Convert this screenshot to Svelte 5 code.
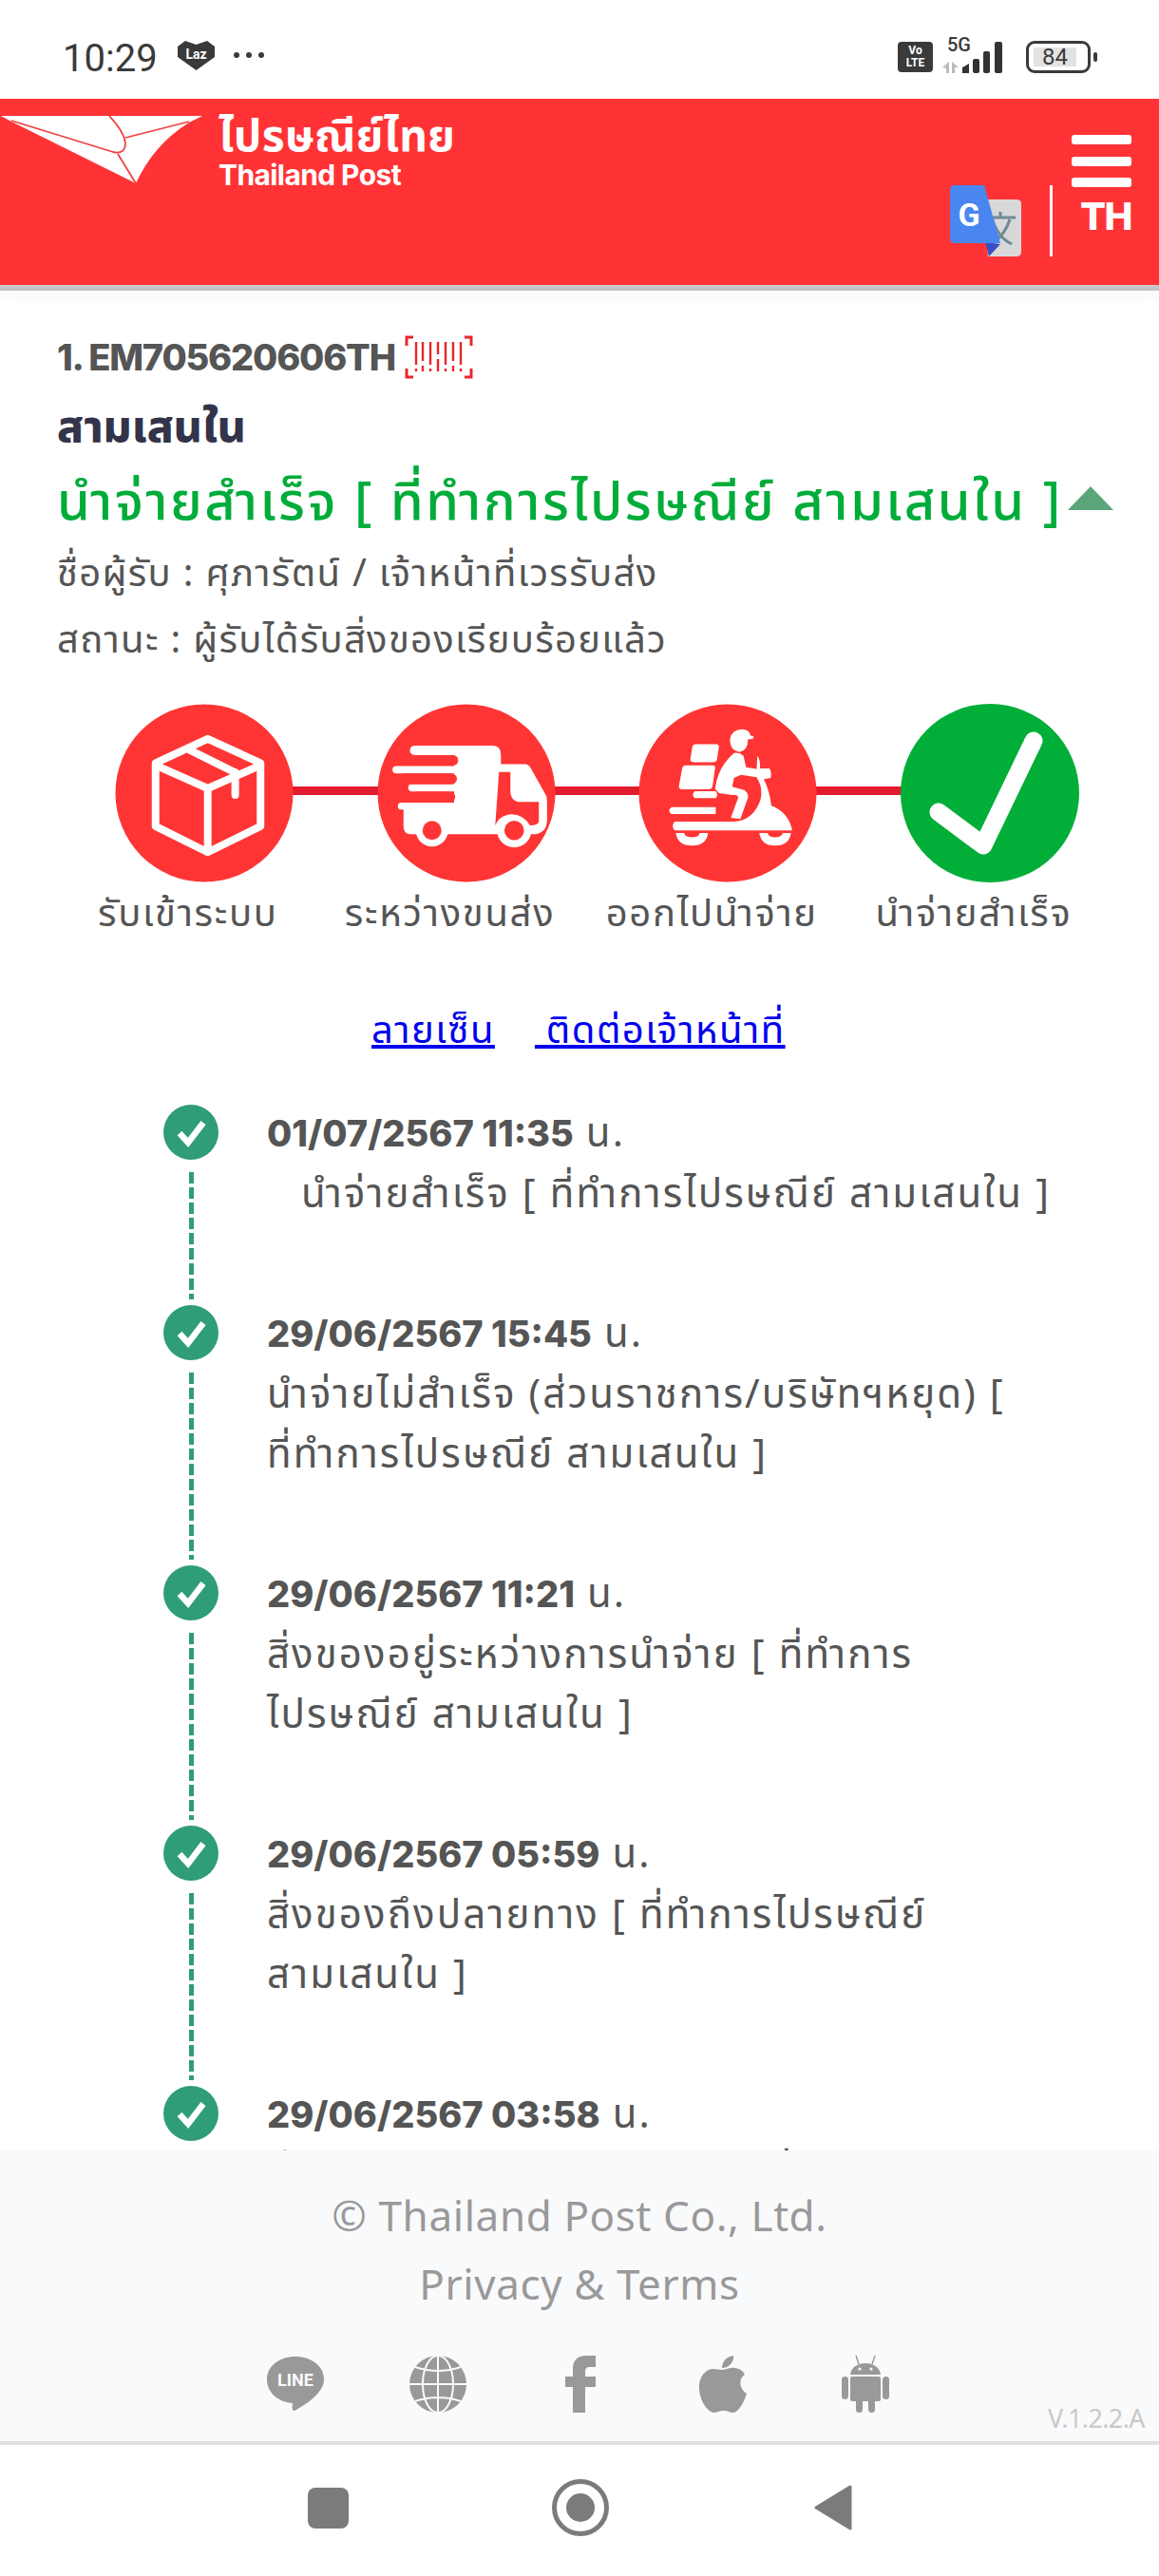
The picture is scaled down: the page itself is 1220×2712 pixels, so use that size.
<script>
  const steps = [
    { label: 'รับเข้าระบบ', kind: 'box' },
    { label: 'ระหว่างขนส่ง', kind: 'truck' },
    { label: 'ออกไปนำจ่าย', kind: 'scooter' },
    { label: 'นำจ่ายสำเร็จ', kind: 'done' }
  ];

  const events = [
    { date: '01/07/2567 11:35', lines: ['นำจ่ายสำเร็จ [ ที่ทำการไปรษณีย์ สามเสนใน ]'], indent: true },
    { date: '29/06/2567 15:45', lines: ['นำจ่ายไม่สำเร็จ (ส่วนราชการ/บริษัทฯหยุด) [', 'ที่ทำการไปรษณีย์ สามเสนใน ]'] },
    { date: '29/06/2567 11:21', lines: ['สิ่งของอยู่ระหว่างการนำจ่าย [ ที่ทำการ', 'ไปรษณีย์ สามเสนใน ]'] },
    { date: '29/06/2567 05:59', lines: ['สิ่งของถึงปลายทาง [ ที่ทำการไปรษณีย์', 'สามเสนใน ]'] },
    { date: '29/06/2567 03:58', lines: ['สิ่งของอยู่ระหว่างการขนส่ง [ ที่ทำการ', 'ไปรษณีย์ สามเสนใน ]'] }
  ];
</script>

<div class="page">
  <div class="status">
    <div class="status-left">
      <span class="clock">10:29</span>
      <svg class="laz" viewBox="0 0 39 31"><path d="M8 0 L19.5 4 L31 0 L39 6 V17 L19.5 31 L0 17 V6 Z" fill="#3a3a3a"/><text x="19.5" y="19" text-anchor="middle" class="laz-text">Laz</text></svg>
      <span class="dots"><i></i><i></i><i></i></span>
    </div>
    <div class="status-right">
      <div class="volte"><span>Vo</span><span>LTE</span></div>
      <div class="signal">
        <span class="five">5G</span>
        <svg viewBox="0 0 72 36" width="72" height="36">
          <path d="M0 30 L7 24 V36 H4 V31 Z M10 36 V24 L17 30 H13 V36 Z" fill="#bbb"/>
          <path d="M21 30 L28 26 V36 H21 Z" fill="#333"/>
          <rect x="32" y="21" width="7" height="15" rx="2" fill="#333"/>
          <rect x="43" y="13" width="7" height="23" rx="2" fill="#333"/>
          <rect x="55" y="3" width="8" height="33" rx="2" fill="#333"/>
        </svg>
      </div>
      <div class="battery"><div class="battery-body"><span>84</span></div><i></i></div>
    </div>
  </div>

  <header class="top">
    <div class="brand">
      <svg class="logo" viewBox="0 0 214 72">
        <path d="M1 0 H213 L199 7 Q162 30 143 71 L12 6 Z" fill="#fff"/>
        <path d="M12 5 L119 38 Q132 41 132 28 Q130 16 115 0 M132 23 L199 6 M124 40 L143 71" fill="none" stroke="#f04040" stroke-width="1.8"/>
      </svg>
      <div class="brand-text">
        <div class="brand-th">ไปรษณีย์ไทย</div>
        <div class="brand-en">Thailand Post</div>
      </div>
    </div>
    <div class="top-right">
      <svg class="translate" viewBox="0 0 75 75">
        <path d="M35 15 H70 Q75 15 75 20 V70 Q75 75 70 75 H40 Z" fill="#d8d8d8"/>
        <path d="M38 34 H69 M53 28 V34 M44 34 Q50 55 65 62 M63 36 Q58 52 44 62" fill="none" stroke="#6e8a96" stroke-width="3"/>
        <path d="M37 60 L53 62 L41 75 Z" fill="#3b4fc0"/>
        <path d="M5 0 H36 L53 61 H5 Q0 61 0 56 V5 Q0 0 5 0 Z" fill="#4a86f0"/>
        <text x="20" y="43" text-anchor="middle" class="g">G</text>
      </svg>
      <div class="divider"></div>
      <div class="menu-col">
        <div class="burger"><i></i><i></i><i></i></div>
        <span class="lang">TH</span>
      </div>
    </div>
  </header>
  <div class="top-shadow"></div>

  <main class="content">
    <div class="summary">
      <div class="track-no">
        <span>1. EM705620606TH</span>
        <svg viewBox="0 0 72 46" width="72" height="46">
          <path d="M9 2 H2 V11 M63 2 H70 V11 M2 35 V44 H9 M70 35 V44 H63" fill="none" stroke="#e8262c" stroke-width="3"/>
          <path d="M12 7 V31 M12 35 V38 M19 7 V27 M19 32 V38 M27 7 V31 M27 35 V38 M35 7 V20 M35 25 V38 M43 7 V31 M43 35 V38 M51 7 V27 M51 32 V38 M59 7 V31 M59 35 V38" fill="none" stroke="#e8262c" stroke-width="2.4"/>
        </svg>
      </div>
      <div class="office">สามเสนใน</div>
      <div class="result">
        <span>นำจ่ายสำเร็จ [ ที่ทำการไปรษณีย์ สามเสนใน ]</span>
        <i class="caret"></i>
      </div>
      <div class="info first">ชื่อผู้รับ : ศุภารัตน์ / เจ้าหน้าที่เวรรับส่ง</div>
      <div class="info">สถานะ : ผู้รับได้รับสิ่งของเรียบร้อยแล้ว</div>
    </div>

    <div class="steps">
      {#each steps as step, i}
        <div class="step">
          <div class="badge">
            {#if i < steps.length - 1}<span class="connector"></span>{/if}
            {#if step.kind === 'box'}
              <svg viewBox="-1.5 -5.5 631 631">
                <circle cx="314" cy="310" r="281" fill="#ff3535"/>
                <g fill="none" stroke="#fff" stroke-width="24" stroke-linejoin="round">
                  <path d="M325 138 L492 215 V415 L325 497 L160 415 V215 Z"/>
                  <path d="M160 222 L325 295 L492 222 M325 295 V497"/>
                  <path d="M265 172 L412 245"/>
                </g>
                <path d="M412 245 V316" stroke="#fff" stroke-width="24" stroke-linecap="round"/>
              </svg>
            {:else if step.kind === 'truck'}
              <svg viewBox="13.5 -5.5 631 631">
                <circle cx="329" cy="310" r="281" fill="#ff3535"/>
                <g fill="#fff">
                  <path d="M290 160 H410 Q438 160 438 188 V218 H515 Q525 218 532 230 L578 312 Q584 320 584 335 V395 Q584 435 545 440 H150 Q130 438 130 415 V351 H290 Z"/>
                  <circle cx="220" cy="428" r="51"/>
                  <circle cx="480" cy="428" r="54"/>
                </g>
                <g fill="none" stroke="#fff" stroke-linecap="round">
                  <path d="M165 175 H320" stroke-width="30"/>
                  <path d="M107 236 H320" stroke-width="24"/>
                  <path d="M157 293 H320" stroke-width="24"/>
                  <path d="M123 351 H320" stroke-width="22"/>
                </g>
                <g fill="none" stroke="#ff3535" stroke-linecap="round">
                  <path d="M170 206 H287" stroke-width="32"/>
                  <path d="M130 265 H282" stroke-width="34"/>
                  <path d="M170 322 H277" stroke-width="33"/>
                </g>
                <path d="M432 243 H468 V300 Q468 338 500 338 H558 V400 Q555 412 530 412 Q505 372 460 378 Q430 385 420 412 Z" fill="#ff3535"/>
                <circle cx="220" cy="428" r="30" fill="#ff3535"/>
                <circle cx="480" cy="428" r="31" fill="#ff3535"/>
              </svg>
            {:else if step.kind === 'scooter'}
              <svg viewBox="842.5 -5.5 631 631">
                <circle cx="1158" cy="310" r="281" fill="#ff3535"/>
                <g fill="#fff">
                  <path d="M1165 140 Q1170 108 1205 108 Q1228 110 1230 128 L1240 130 L1238 138 L1222 140 Q1222 175 1195 180 Q1165 175 1165 140 Z"/>
                  <path d="M1056 155 H1122 Q1132 155 1130 166 L1124 204 Q1122 212 1112 212 H1050 Q1038 212 1040 202 L1046 164 Q1048 155 1056 155 Z"/>
                  <path d="M1026 222 H1110 Q1120 222 1118 232 L1110 288 Q1108 298 1096 298 H1014 Q1002 298 1004 286 L1014 232 Q1016 222 1026 222 Z"/>
                  <path d="M1178 183 Q1195 180 1208 192 L1216 228 L1262 236 L1265 262 L1200 252 L1178 262 L1172 290 L1210 300 Q1225 310 1222 325 L1198 392 L1168 388 L1192 322 Q1186 314 1172 316 L1130 310 L1118 296 Q1128 225 1178 183 Z"/>
                  <path d="M1252 192 Q1262 205 1260 232 L1290 232 Q1298 240 1294 262 L1272 266 Q1290 300 1296 350 Q1350 370 1362 428 H990 Q978 414 990 400 H1180 Q1240 395 1262 330 Q1270 290 1250 262 L1250 222 Z"/>
                  <path d="M1054 304 H1120 Q1130 315 1120 326 H1054 Q1042 315 1054 304 Z"/>
                  <path d="M980 354 H1120 L1120 376 H980 Q966 365 980 354 Z"/>
                  <path d="M1000 376 H1090 Q1104 388 1090 400 H1000 Z" fill="#ff3535"/>
                  <path d="M994 436 H1096 Q1090 476 1045 476 Q1000 476 994 436 Z"/>
                  <path d="M1258 436 H1358 Q1352 476 1308 476 Q1264 476 1258 436 Z"/>
                </g>
                <path d="M1020 436 H1070 Q1066 450 1045 450 Q1024 450 1020 436 Z" fill="#ff3535"/>
                <path d="M1284 436 H1332 Q1328 450 1308 450 Q1288 450 1284 436 Z" fill="#ff3535"/>
              </svg>
            {:else}
              <svg viewBox="0 0 210 210">
                <circle cx="105" cy="105" r="94" fill="#00ae38"/>
                <path d="M51 125 L98 160 L151 50" fill="none" stroke="#fff" stroke-width="19" stroke-linecap="round" stroke-linejoin="round"/>
              </svg>
            {/if}
          </div>
          <div class="step-label">{step.label}</div>
        </div>
      {/each}
    </div>

    <div class="links">
      <a href="#sign">ลายเซ็น</a>
      <a href="#contact">&nbsp;ติดต่อเจ้าหน้าที่</a>
    </div>

    <div class="timeline">
      {#each events as ev}
        <div class="event">
          <div class="rail">
            <svg class="tick" viewBox="0 0 58 58">
              <circle cx="29" cy="29" r="29" fill="#2f9c7a"/>
              <path d="M17 30 L26 40 L42 19" fill="none" stroke="#fff" stroke-width="6.5"/>
            </svg>
            <span class="dash"></span>
          </div>
          <div class="event-body">
            <div class="event-date"><b>{ev.date}</b> น.</div>
            {#each ev.lines as line}
              <div class="event-line" class:indent={ev.indent}>{line}</div>
            {/each}
          </div>
        </div>
      {/each}
    </div>
  </main>

  <footer class="foot">
    <div class="foot-line">© Thailand Post Co., Ltd.</div>
    <div class="foot-line">Privacy &amp; Terms</div>
    <div class="socials">
      <svg viewBox="0 0 60 60"><path d="M30 1 C47 1 60 11 60 25 C60 38 44 50 29 58 C27 58 26 56 27 50 C12 49 0 39 0 25 C0 11 13 1 30 1 Z" fill="#999"/><text x="30" y="32" text-anchor="middle" class="line-text">LINE</text></svg>
      <svg viewBox="0 0 60 60"><circle cx="30" cy="30" r="30" fill="#999"/><g fill="none" stroke="#f9fafc" stroke-width="2"><path d="M0 30 H60 M6 12 Q30 20 54 12 M6 48 Q30 40 54 48 M30 0 V60"/><ellipse cx="30" cy="30" rx="16" ry="30"/></g></svg>
      <svg viewBox="0 0 60 60"><path d="M22 60 V33 H14 V22 H22 V14 C22 4 28 0 36 0 H46 V12 H40 C36 12 35 14 35 17 V22 H46 V33 H35 V60 Z" fill="#999"/></svg>
      <svg viewBox="0 0 60 60"><path d="M29 15 C33 15 38 12 43 13 C48 14 51 16 53 20 C47 23 46 34 55 40 C52 49 47 59 41 60 C37 60 35 58 31 58 C26 58 24 60 20 60 C12 58 4 44 5 31 C6 20 13 14 20 14 C23 14 26 15 29 15 Z M29 13 C29 6 34 1 41 0 C42 7 36 13 29 13 Z" fill="#999"/></svg>
      <svg viewBox="0 0 60 60"><g fill="#999"><path d="M14 20 C15 12 22 8 30 8 C38 8 45 12 46 20 Z"/><rect x="14" y="22" width="32" height="26" rx="2"/><rect x="5" y="22" width="7" height="24" rx="3.5"/><rect x="48" y="22" width="7" height="24" rx="3.5"/><rect x="20" y="44" width="7" height="16" rx="3.5"/><rect x="33" y="44" width="7" height="16" rx="3.5"/></g><path d="M20 0 L23 9 M40 0 L37 9" stroke="#999" stroke-width="1.5"/><circle cx="24" cy="14" r="1.6" fill="#f9fafc"/><circle cx="36" cy="14" r="1.6" fill="#f9fafc"/></svg>
    </div>
    <span class="version">V.1.2.2.A</span>
  </footer>

  <nav class="nav">
    <i class="nav-square"></i>
    <svg width="60" height="60" viewBox="0 0 60 60"><circle cx="30" cy="30" r="27.5" fill="none" stroke="#7b7b7b" stroke-width="5"/><circle cx="30" cy="30" r="15" fill="#7b7b7b"/></svg>
    <svg class="nav-back" width="40" height="48" viewBox="0 0 40 48"><path d="M38 2 V46 L2 24 Z" fill="#7b7b7b" stroke="#7b7b7b" stroke-width="3" stroke-linejoin="round"/></svg>
  </nav>
</div>

<style>
  :global(body) {
    margin: 0;
    background: #fff;
  }

  .page {
    width: 1220px;
    height: 2712px;
    display: flex;
    flex-direction: column;
    overflow: hidden;
    font-family: "Noto Sans Thai", "Noto Sans", "Inter", "Liberation Sans", sans-serif;
    color: #555;
  }

  i {
    display: block;
  }

  /* status bar */
  .status {
    height: 104px;
    flex: none;
    display: flex;
    justify-content: space-between;
    align-items: center;
    padding: 24px 65px 8px 66px;
    box-sizing: border-box;
  }

  .status-left,
  .status-right {
    display: flex;
    align-items: center;
  }

  .clock {
    font-family: Roboto, sans-serif;
    font-size: 40px;
    line-height: 48px;
    color: #3a3a3a;
    margin-top: 3px;
  }

  .laz {
    width: 39px;
    height: 31px;
    margin: -3px 0 0 21px;
  }

  .laz-text {
    font: 700 14px Roboto, sans-serif;
    fill: #fff;
  }

  .dots {
    display: flex;
    gap: 7px;
    margin-left: 20px;
    margin-top: -4px;
  }

  .dots i {
    width: 6px;
    height: 6px;
    border-radius: 50%;
    background: #3a3a3a;
  }

  .volte {
    width: 37px;
    height: 32px;
    background: #3a3a3a;
    border-radius: 4px;
    color: #fff;
    font: 700 12px/13px Roboto, sans-serif;
    display: flex;
    flex-direction: column;
    align-items: center;
    justify-content: center;
  }

  .signal {
    position: relative;
    width: 72px;
    height: 36px;
    margin-left: 10px;
    margin-top: -2px;
  }

  .signal svg {
    position: absolute;
    left: 0;
    top: 0;
  }

  .five {
    position: absolute;
    left: 5px;
    top: -5px;
    font: 500 20px/22px Roboto, sans-serif;
    color: #3a3a3a;
  }

  .battery {
    display: flex;
    align-items: center;
    margin-left: 16px;
  }

  .battery-body {
    display: flex;
    padding: 4px 12px 4px 5px;
    box-sizing: content-box;
    width: 45px;
    height: 20px;
    border: 3px solid #3a3a3a;
    border-radius: 9px;
  }

  .battery-body span {
    flex: 1;
    background: #e2e2e2;
    font: 24px/20px Roboto, sans-serif;
    color: #3a3a3a;
    text-align: center;
  }

  .battery i {
    width: 4px;
    height: 10px;
    margin-left: 3px;
    background: #3a3a3a;
    border-radius: 2px;
  }

  /* red header */
  .top {
    height: 196px;
    flex: none;
    background: #ff3336;
    display: flex;
    justify-content: space-between;
    box-sizing: border-box;
    padding: 18px 29px 0 0;
    color: #fff;
  }

  .top-shadow {
    height: 6px;
    flex: none;
    background: linear-gradient(#cfcfcf, #bdbdbd);
    box-shadow: 0 6px 12px rgba(0, 0, 0, 0.06);
  }

  .brand {
    display: flex;
    gap: 16px;
    align-items: flex-start;
  }

  .logo {
    width: 214px;
    height: 72px;
  }

  .brand-th {
    font-size: 46px;
    font-weight: 700;
    line-height: 50px;
    letter-spacing: 0.4px;
    margin-top: -2px;
  }

  .brand-en {
    font-size: 30px;
    font-weight: 700;
    line-height: 30px;
    font-family: Inter, sans-serif;
    letter-spacing: -0.6px;
    margin-top: -1px;
  }

  .top-right {
    display: flex;
    align-items: flex-start;
  }

  .translate {
    width: 75px;
    height: 75px;
    margin-top: 73px;
  }

  .g {
    font: 700 34px Roboto, sans-serif;
    fill: #fff;
  }

  .divider {
    width: 3px;
    height: 75px;
    background: #fff;
    margin: 73px 20px 0 30px;
  }

  .menu-col {
    width: 63px;
    padding-top: 20px;
    display: flex;
    flex-direction: column;
    align-items: flex-end;
  }

  .burger {
    width: 63px;
    display: flex;
    flex-direction: column;
    gap: 12.5px;
  }

  .burger i {
    height: 10px;
    background: #fff;
    border-radius: 3px;
  }

  .lang {
    font: 800 40px/48px Inter, sans-serif;
    margin-top: 7px;
    letter-spacing: -1.5px;
  }

  /* main */
  .content {
    flex: 1;
    min-height: 0;
    overflow: hidden;
    padding: 46px 0 0 60px;
  }

  .track-no {
    display: flex;
    align-items: center;
    gap: 10px;
    height: 48px;
    font: 800 38px/48px Inter, sans-serif;
    letter-spacing: -1.2px;
    color: #555;
  }

  .office {
    margin-top: 21px;
    font-size: 46px;
    font-weight: 800;
    line-height: 60px;
    color: #33334a;
  }

  .result {
    display: flex;
    align-items: center;
    margin-top: 13px;
    height: 72px;
    font-size: 56px;
    font-weight: 500;
    letter-spacing: 2.5px;
    color: #00ac3a;
    white-space: nowrap;
  }

  .caret {
    margin: -12px 0 0 5px;
    width: 0;
    height: 0;
    border-left: 24px solid transparent;
    border-right: 24px solid transparent;
    border-bottom: 25px solid #5aa67a;
  }

  .info {
    font-size: 40px;
    letter-spacing: 1.3px;
    line-height: 70px;
    white-space: nowrap;
  }

  .info.first {
    margin-top: 4px;
  }

  .steps {
    margin-top: 20px;
    display: grid;
    grid-template-columns: repeat(4, 275.7px);
  }

  .step {
    text-align: center;
  }

  .badge {
    position: relative;
    width: 210px;
    height: 210px;
    margin-left: 50px;
  }

  .badge svg {
    position: relative;
    display: block;
    width: 210px;
    height: 210px;
  }

  .connector {
    position: absolute;
    left: 150px;
    top: 98px;
    width: 276px;
    height: 9px;
    background: #e31b2e;
  }

  .step-label {
    font-size: 40px;
    letter-spacing: 1.7px;
    line-height: 50px;
    white-space: nowrap;
    margin-top: -2px;
  }

  .links {
    margin-top: 73px;
    padding-left: 331px;
    display: flex;
    gap: 42px;
    font-size: 40px;
    letter-spacing: 1.5px;
    line-height: 50px;
  }

  .links a {
    color: #0000ee;
  }

  .timeline {
    margin-top: 52px;
    padding-left: 112px;
  }

  .event {
    display: flex;
    min-height: 210px;
  }

  .rail {
    width: 109px;
    flex: none;
    display: flex;
    flex-direction: column;
    position: relative;
  }

  .tick {
    width: 58px;
    height: 58px;
    flex: none;
    display: block;
  }

  .dash {
    position: absolute;
    left: 27px;
    top: 71px;
    bottom: 6px;
    width: 5px;
    background: repeating-linear-gradient(#2f9c7a 0 12px, transparent 12px 16px);
  }

  .event-body {
    padding-bottom: 84px;
  }

  .event-date {
    font-size: 42px;
    letter-spacing: 2.1px;
    line-height: 63px;
    margin-top: -1px;
    margin-bottom: 1px;
  }

  .event-date b {
    font-family: Inter, sans-serif;
    font-weight: 800;
    font-size: 38px;
    letter-spacing: 0;
  }

  .event-line {
    font-size: 42px;
    letter-spacing: 2.1px;
    line-height: 63px;
    white-space: nowrap;
  }

  .indent {
    padding-left: 36px;
  }

  /* footer */
  .foot {
    position: relative;
    flex: none;
    height: 310px;
    background: #f9fafc;
    border-bottom: 4px solid #e0e0e0;
    text-align: center;
    padding-top: 32px;
    box-sizing: border-box;
    font-family: "Noto Sans", sans-serif;
    color: #999;
  }

  .foot-line {
    font-size: 44px;
    letter-spacing: 0.6px;
    line-height: 72px;
  }

  .socials {
    display: flex;
    justify-content: center;
    gap: 90px;
    margin-top: 40px;
    padding-left: 2px;
  }

  .socials svg {
    width: 60px;
    height: 60px;
  }

  .line-text {
    font: 700 18px Roboto, sans-serif;
    fill: #f9fafc;
  }

  .version {
    position: absolute;
    right: 15px;
    bottom: 6px;
    font-size: 27px;
    color: #c9c9c9;
    letter-spacing: -0.6px;
  }

  /* android nav */
  .nav {
    height: 138px;
    flex: none;
    display: flex;
    justify-content: center;
    align-items: center;
    gap: 214px;
    box-sizing: border-box;
    padding-bottom: 6px;
  }

  .nav-square {
    width: 43px;
    height: 43px;
    border-radius: 8px;
    background: #7b7b7b;
  }

  .nav-back {
    margin-left: 2px;
  }
</style>
